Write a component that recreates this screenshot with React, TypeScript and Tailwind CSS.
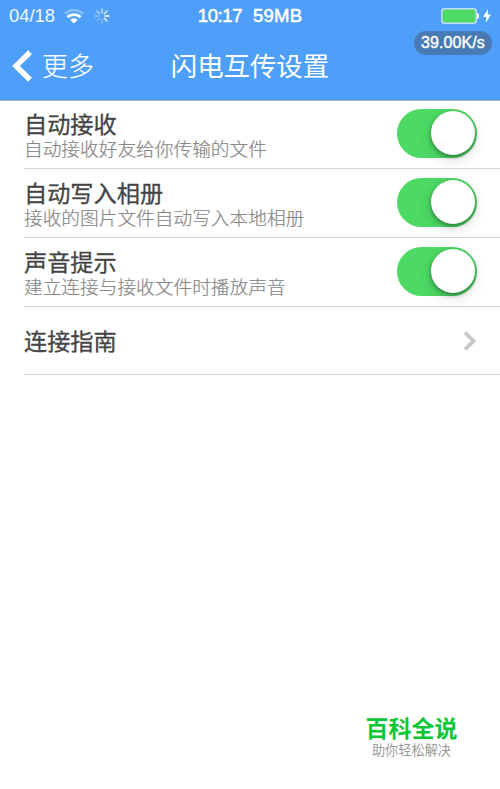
const settings = [
  { title: '自动接收', detail: '自动接收好友给你传输的文件', height: 'h-[68px] pt-2' },
  { title: '自动写入相册', detail: '接收的图片文件自动写入本地相册', height: 'h-[69px] pt-[9px]' },
  { title: '声音提示', detail: '建立连接与接收文件时播放声音', height: 'h-[69px] pt-[9px]' },
];

function Toggle() {
  return (
    <button
      role="switch"
      aria-checked="true"
      className="flex h-[49px] w-20 shrink-0 items-center justify-end rounded-full bg-[#4cd964] pr-[2.5px] pb-px"
    >
      <span className="h-11 w-11 rounded-full bg-white shadow-[0_2px_4px_rgba(0,0,0,0.38),0_5px_14px_rgba(0,0,0,0.12)]" />
    </button>
  );
}

function StatusBar() {
  return (
    <div className="grid h-8 grid-cols-3 items-center px-[9px]">
      <div className="flex items-center">
        <span className="w-[47px] whitespace-nowrap text-[18.4px] leading-8 font-light text-white/90">04/18</span>
        <svg className="ml-2 h-[15px] w-[20px]" viewBox="0 0 20 15" fill="none">
          <path d="M1 4.8C6-.1 14-.1 19 4.8" stroke="white" strokeOpacity=".35" strokeWidth="2.3" />
          <path d="M3.5 8.3C7 4.6 13 4.6 16.5 8.3" stroke="white" strokeWidth="2.8" />
          <path d="M6.3 10.7C8.4 8.7 11.6 8.7 13.7 10.7L10 14.4Z" fill="white" />
        </svg>
        <svg className="ml-[10px] h-4 w-4" viewBox="0 0 16 16" stroke="white" strokeWidth="1.5" strokeLinecap="round">
          <path d="M8 1v4" opacity=".65" />
          <path d="m13 3-2.7 2.7" opacity=".8" />
          <path d="M15 8h-4" />
          <path d="m13 13-2.7-2.7" opacity=".85" />
          <path d="M8 15v-4" opacity=".3" />
          <path d="m3 13 2.7-2.7" opacity=".3" />
          <path d="M1 8h4" opacity=".4" />
          <path d="m3 3 2.7 2.7" opacity=".55" />
        </svg>
      </div>
      <div className="flex justify-center gap-[11px] whitespace-nowrap text-[18.5px] leading-8 text-white [-webkit-text-stroke:0.55px_white]">
        <span className="tracking-[-0.4px]">10:17</span>
        <span className="tracking-[0.2px]">59MB</span>
      </div>
      <div className="flex items-center justify-end">
        <svg className="h-4 w-[38px]" viewBox="0 0 38 16">
          <rect x=".75" y=".75" width="34.5" height="14.5" rx="2.5" fill="#4cd964" stroke="#bddcff" strokeWidth="1.5" />
          <path d="M36 5h.5c2 0 2 6 0 6H36Z" fill="white" />
        </svg>
        <svg className="ml-[4px] h-[14px] w-2" viewBox="0 0 8 14">
          <path d="M5 0 0 8h3.4L2.6 14 8 5.6H4.7Z" fill="white" />
        </svg>
      </div>
    </div>
  );
}

export default function App() {
  return (
    <main className="h-[789px] w-[500px] overflow-hidden bg-white font-['Liberation_Sans','Noto_Sans_CJK_SC',sans-serif]">
      <header className="relative h-[101px] border-b border-[#a8b5c2] bg-[#4e9ff9] text-white">
        <StatusBar />
        <div className="grid h-[68px] grid-cols-3 items-center">
          <button className="flex items-center">
            <svg className="ml-3 h-8 w-5" viewBox="0 0 20 32" fill="none">
              <path d="M18 2.3 4 16 18 29.7" stroke="white" strokeWidth="5.4" />
            </svg>
            <span className="ml-[10px] pt-px text-[26px] leading-9 font-light [-webkit-text-stroke:0.15px_white]">更多</span>
          </button>
          <h1 className="whitespace-nowrap pt-px text-center text-[26.4px] leading-9 font-normal">闪电互传设置</h1>
        </div>
        <span className="absolute top-[31px] left-[414px] h-6 w-[78px] rounded-full bg-[#487bb4] text-center text-[16px] leading-6 tracking-[0.1px] [-webkit-text-stroke:0.4px_white]">39.00K/s</span>
      </header>

      <section className="pl-6">
        {settings.map((item) => (
          <div key={item.title} className={`flex items-start justify-between border-b border-[#d6d6d8] pr-[23px] ${item.height}`}>
            <div className="pt-[2px]">
              <h2 className="text-[23.2px] leading-[28px] font-normal text-[#444] [-webkit-text-stroke:0.3px_#444]">{item.title}</h2>
              <p className="text-[18.7px] leading-[22px] font-light text-[#888] [-webkit-text-stroke:0.2px_#888]">{item.detail}</p>
            </div>
            <Toggle />
          </div>
        ))}
        <div className="flex h-[68px] items-center justify-between border-b border-[#d6d6d8] pr-6">
          <h2 className="pt-[3px] text-[23.2px] leading-[28px] font-normal text-[#444] [-webkit-text-stroke:0.3px_#444]">连接指南</h2>
          <svg className="mt-px h-5 w-[13px]" viewBox="0 0 13 20" fill="none">
            <path d="m2 1.6 8.6 8.4L2 18.4" stroke="#c7c7cc" strokeWidth="3.8" />
          </svg>
        </div>
      </section>

      <footer className="mt-[340px] ml-[365px] w-[93px] whitespace-nowrap text-center">
        <p className="text-[23px] leading-7 font-bold text-[#0bc736]">百科全说</p>
        <p className="text-[13.2px] leading-4 text-[#999]">助你轻松解决</p>
      </footer>
    </main>
  );
}
